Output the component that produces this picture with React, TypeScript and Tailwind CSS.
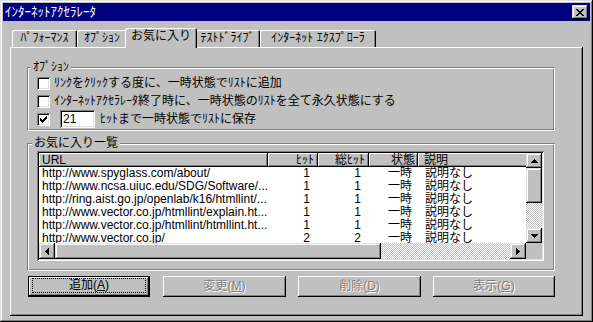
import React from "react";

const FONT = "font-['Liberation_Sans','Noto_Sans_CJK_JP',sans-serif]";
const WINFRAME =
  "shadow-[inset_-1px_-1px_#000,inset_1px_1px_#dfdfdf,inset_-2px_-2px_#808080,inset_2px_2px_#fff]";
const BTN = "shadow-[inset_-1px_-1px_#000,inset_1px_1px_#fff,inset_-2px_-2px_#808080]";
const SBTN =
  "shadow-[inset_-1px_-1px_#000,inset_1px_1px_#dfdfdf,inset_-2px_-2px_#808080,inset_2px_2px_#fff]";
const DEFBTN =
  "shadow-[inset_1px_1px_#000,inset_-1px_-1px_#000,inset_-2px_-2px_#000,inset_2px_2px_#fff,inset_-3px_-3px_#808080]";
const PANEL = "shadow-[inset_-1px_-1px_#000,inset_1px_1px_#fff,inset_-2px_-2px_#808080]";
const SUNKEN =
  "shadow-[inset_1px_1px_#808080,inset_-1px_-1px_#fff,inset_2px_2px_#000,inset_-2px_-2px_#dfdfdf]";
const ETCHED =
  "shadow-[inset_1px_1px_#808080,inset_-1px_-1px_#fff,inset_2px_2px_#fff,inset_-2px_-2px_#808080]";
const TAB = "shadow-[inset_1px_1px_#fff,inset_-1px_0_#000,inset_-2px_0_#808080]";
const DITHER =
  "bg-[image:repeating-conic-gradient(#c0c0c0_0_25%,#fff_0_50%)] bg-[length:2px_2px]";
const DISABLED = "text-[#808080] [text-shadow:1px_1px_0_#fff]";

type R = [number, number, number, number];
function Pix({ w, h, rects }: { w: number; h: number; rects: R[] }) {
  return (
    <svg width={w} height={h} viewBox={`0 0 ${w} ${h}`} shapeRendering="crispEdges">
      {rects.map(([x, y, rw, rh], i) => (
        <rect key={i} x={x} y={y} width={rw} height={rh} fill="#000" />
      ))}
    </svg>
  );
}

const UP: R[] = [[3, 0, 1, 1], [2, 1, 3, 1], [1, 2, 5, 1], [0, 3, 7, 1]];
const DOWN: R[] = [[0, 0, 7, 1], [1, 1, 5, 1], [2, 2, 3, 1], [3, 3, 1, 1]];
const LEFT: R[] = [[0, 3, 1, 1], [1, 2, 1, 3], [2, 1, 1, 5], [3, 0, 1, 7]];
const RIGHT: R[] = [[0, 0, 1, 7], [1, 1, 1, 5], [2, 2, 1, 3], [3, 3, 1, 1]];
const CLOSE: R[] = [
  [0, 0, 2, 1], [6, 0, 2, 1],
  [1, 1, 2, 1], [5, 1, 2, 1],
  [2, 2, 4, 1],
  [3, 3, 2, 1],
  [2, 4, 4, 1],
  [1, 5, 2, 1], [5, 5, 2, 1],
  [0, 6, 2, 1], [6, 6, 2, 1],
];
const CHECK: R[] = [0, 1, 2, 3, 4, 5, 6].map((c) => [c, [2, 3, 4, 3, 2, 1, 0][c], 1, 3] as R);

function CheckBox({ checked }: { checked?: boolean }) {
  return (
    <div className={`w-[13px] h-[13px] bg-white ${SUNKEN} flex items-center justify-center shrink-0`}>
      {checked && <Pix w={7} h={7} rects={CHECK} />}
    </div>
  );
}

function Tab({ label, w, selected }: { label: string; w: string; selected?: boolean }) {
  return (
    <div
      className={`${w} ${
        selected ? "h-[20px] -mb-px -mx-[2px] relative z-10" : "h-[17px]"
      } bg-[#c0c0c0] ${TAB} rounded-t-[2px] flex justify-center pt-[2px] whitespace-nowrap`}
    >
      {label}
    </div>
  );
}

const rows = [
  ["http://www.spyglass.com/about/", "1", "1"],
  ["http://www.ncsa.uiuc.edu/SDG/Software/...", "1", "1"],
  ["http://ring.aist.go.jp/openlab/k16/htmllint/...", "1", "1"],
  ["http://www.vector.co.jp/htmllint/explain.ht...", "1", "1"],
  ["http://www.vector.co.jp/htmllint/htmllint.ht...", "1", "1"],
  ["http://www.vector.co.jp/", "2", "2"],
];

function Button({
  label,
  u,
  w,
  def,
  disabled,
}: {
  label: string;
  u: string;
  w: string;
  def?: boolean;
  disabled?: boolean;
}) {
  const text = (
    <span className={disabled ? DISABLED : ""}>
      {label}(<span className="underline">{u}</span>)
    </span>
  );
  return (
    <div className={`${w} h-[21px] bg-[#c0c0c0] ${def ? DEFBTN : BTN} flex shrink-0`}>
      {def ? (
        <div className="flex-1 mx-[4px] mt-[2px] mb-[4px] border border-dotted border-black flex items-center justify-center">
          {text}
        </div>
      ) : (
        <div className="flex-1 flex items-center justify-center">{text}</div>
      )}
    </div>
  );
}

export default function App() {
  return (
    <div
      className={`${FONT} w-[593px] h-[322px] bg-[#c0c0c0] text-black text-[12px] leading-[13px] p-[3px] ${WINFRAME} overflow-hidden`}
    >
      {/* Title bar */}
      <div className="h-[18px] bg-[#000080] flex items-center justify-between pl-[2px] pr-[2px]">
        <span className="text-white text-[13px] leading-[14px]">ｲﾝﾀｰﾈｯﾄｱｸｾﾗﾚｰﾀ</span>
        <div className={`w-[16px] h-[14px] bg-[#c0c0c0] ${SBTN} flex items-center justify-center`}>
          <Pix w={8} h={7} rects={CLOSE} />
        </div>
      </div>

      <div className="mt-[7px] px-[7px]">
        {/* Tabs */}
        <div className="flex items-end h-[19px] pl-[2px]">
          <Tab label="ﾊﾟﾌｫｰﾏﾝｽ" w="w-[65px]" />
          <Tab label="ｵﾌﾟｼｮﾝ" w="w-[50px]" />
          <Tab label="お気に入り" w="w-[72px]" selected />
          <Tab label="ﾃｽﾄﾄﾞﾗｲﾌﾞ" w="w-[65px]" />
          <Tab label="ｲﾝﾀｰﾈｯﾄ ｴｸｽﾌﾟﾛｰﾗ" w="w-[116px]" />
        </div>

        {/* Panel */}
        <div className={`h-[269px] ${PANEL} pt-[20px] pl-[17px] pr-[28px]`}>
          {/* Options group */}
          <div className={`relative h-[64px] ${ETCHED} pt-[7px] pl-[10px]`}>
            <span className="absolute left-[4px] top-[-6px] px-[2px] bg-[#c0c0c0]">ｵﾌﾟｼｮﾝ</span>
            <div className="flex items-center h-[18px]">
              <CheckBox />
              <span className="ml-[4px] whitespace-nowrap">ﾘﾝｸをｸﾘｯｸする度に、一時状態でﾘｽﾄに追加</span>
            </div>
            <div className="flex items-center h-[18px]">
              <CheckBox />
              <span className="ml-[4px] whitespace-nowrap">
                ｲﾝﾀｰﾈｯﾄｱｸｾﾗﾚｰﾀ終了時に、一時状態のﾘｽﾄを全て永久状態にする
              </span>
            </div>
            <div className="flex items-center h-[18px]">
              <CheckBox checked />
              <div className={`ml-[10px] w-[35px] h-[18px] bg-white ${SUNKEN} pl-[3px] flex items-center`}>
                21
              </div>
              <span className="ml-[5px] whitespace-nowrap">ﾋｯﾄまで一時状態でﾘｽﾄに保存</span>
            </div>
          </div>

          {/* Favorites group */}
          <div className={`relative mt-[12px] h-[128px] ${ETCHED} pt-[8px] pl-[10px] pr-[11px]`}>
            <span className="absolute left-[5px] top-[-6px] px-[2px] bg-[#c0c0c0]">お気に入り一覧</span>
            <div
              className={`h-[110px] bg-white ${SUNKEN} p-[2px] grid grid-cols-[1fr_16px] grid-rows-[1fr_16px]`}
            >
              <div className="overflow-hidden">
                <div className="flex h-[14px]">
                  <div className={`w-[229px] shrink-0 bg-[#c0c0c0] ${BTN} pl-[3px] flex items-center`}>URL</div>
                  <div className={`w-[50px] shrink-0 bg-[#c0c0c0] ${BTN} pr-[4px] flex items-center justify-end`}>
                    ﾋｯﾄ
                  </div>
                  <div className={`w-[51px] shrink-0 bg-[#c0c0c0] ${BTN} pr-[4px] flex items-center justify-end`}>
                    総ﾋｯﾄ
                  </div>
                  <div className={`w-[49px] shrink-0 bg-[#c0c0c0] ${BTN} pr-[3px] flex items-center justify-end`}>
                    状態
                  </div>
                  <div className={`w-[120px] shrink-0 bg-[#c0c0c0] ${BTN} pl-[6px] flex items-center`}>説明</div>
                </div>
                {rows.map(([url, a, b], i) => (
                  <div key={i} className="flex h-[13px] items-center whitespace-nowrap">
                    <div className="w-[229px] shrink-0 pl-[3px] overflow-hidden">{url}</div>
                    <div className="w-[50px] shrink-0 pr-[8px] text-right">{a}</div>
                    <div className="w-[51px] shrink-0 pr-[8px] text-right">{b}</div>
                    <div className="w-[49px] shrink-0 pr-[6px] text-right">一時</div>
                    <div className="w-[120px] shrink-0 pl-[7px]">説明なし</div>
                  </div>
                ))}
              </div>

              {/* vertical scrollbar */}
              <div className="flex flex-col bg-[#c0c0c0]">
                <div className={`h-[15px] ${SBTN} flex items-center justify-center`}>
                  <Pix w={7} h={4} rects={UP} />
                </div>
                <div className={`h-[35px] ${SBTN}`} />
                <div className={`flex-1 ${DITHER}`} />
                <div className={`h-[15px] ${SBTN} flex items-center justify-center`}>
                  <Pix w={7} h={4} rects={DOWN} />
                </div>
              </div>

              {/* horizontal scrollbar */}
              <div className="flex bg-[#c0c0c0]">
                <div className={`w-[16px] ${SBTN} flex items-center justify-center`}>
                  <Pix w={4} h={7} rects={LEFT} />
                </div>
                <div className={`w-[326px] ${SBTN}`} />
                <div className={`flex-1 ${DITHER}`} />
                <div className={`w-[16px] ${SBTN} flex items-center justify-center`}>
                  <Pix w={4} h={7} rects={RIGHT} />
                </div>
              </div>
              <div className="bg-[#c0c0c0]" />
            </div>
          </div>

          {/* Buttons */}
          <div className="mt-[5px] flex pl-[1px]">
            <Button label="追加" u="A" w="w-[122px]" def />
            <div className="ml-[13px]">
              <Button label="変更" u="M" w="w-[123px]" disabled />
            </div>
            <div className="ml-[12px]">
              <Button label="削除" u="D" w="w-[123px]" disabled />
            </div>
            <div className="ml-[12px]">
              <Button label="表示" u="G" w="w-[122px]" disabled />
            </div>
          </div>
        </div>
      </div>
    </div>
  );
}
